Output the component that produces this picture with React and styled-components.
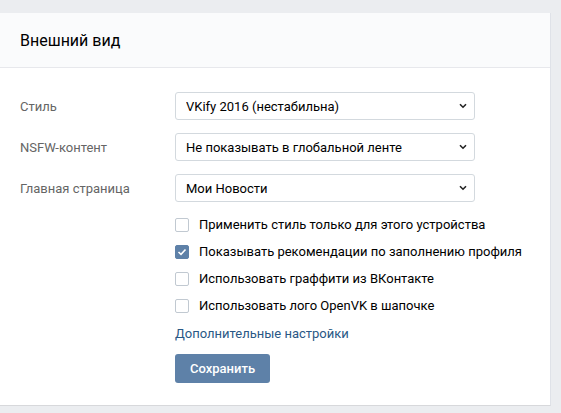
import styled, { createGlobalStyle } from 'styled-components';

const Global = createGlobalStyle`
  body {
    margin: 0;
    background: #ebedf0;
    font-family: Roboto, "Liberation Sans", sans-serif;
    -webkit-font-smoothing: antialiased;
  }
`;

const Page = styled.div`
  padding-top: 13px;
`;

const Card = styled.section`
  width: 551px;
  background: #fff;
  border-right: 1px solid #dfe2e8;
  border-bottom: 1px solid #d7d8db;
  box-sizing: border-box;
`;

const Header = styled.div`
  height: 54px;
  display: flex;
  align-items: center;
  padding-left: 20px;
  background: #fafbfc;
  border-bottom: 1px solid #e7e8ec;
  font-size: 16px;
  color: #000;
`;

const Body = styled.div`
  padding: 24px 0 22px 20px;
`;

const Row = styled.div`
  display: grid;
  grid-template-columns: 155px 300px;
  align-items: center;
  margin-bottom: 13px;

  &:last-of-type {
    margin-bottom: 0;
  }
`;

const Label = styled.div`
  font-size: 13px;
  color: #656565;
`;

const SelectWrap = styled.div`
  position: relative;
  height: 28px;
`;

const Select = styled.select`
  appearance: none;
  width: 100%;
  height: 28px;
  padding: 0 24px 0 10px;
  border: 1px solid #d3d9de;
  border-radius: 3px;
  background: #fff;
  font-family: inherit;
  font-size: 13px;
  color: #000;
  outline: none;
`;

const Chevron = styled.svg`
  position: absolute;
  right: 8px;
  top: 11px;
  pointer-events: none;
`;

const Options = styled.div`
  margin-left: 155px;
  padding-top: 9px;
`;

const CheckRow = styled.label`
  display: flex;
  align-items: center;
  gap: 10px;
  height: 27px;
  font-size: 13px;
  color: #000;
`;

const Box = styled.span`
  width: 14px;
  height: 14px;
  box-sizing: border-box;
  border-radius: 2px;
  border: 1px solid ${(p) => (p.$checked ? '#5e81a8' : '#c1c9d1')};
  background: ${(p) => (p.$checked ? '#5e81a8' : '#fff')};
  display: flex;
  align-items: center;
  justify-content: center;
  flex-shrink: 0;
`;

const Link = styled.a`
  display: block;
  margin-top: 5px;
  font-size: 13px;
  color: #2a5885;
  text-decoration: none;
  line-height: 20px;
`;

const Button = styled.button`
  display: block;
  margin-top: 10px;
  height: 29px;
  padding: 0 15px;
  border: none;
  border-radius: 3px;
  background: #5e81a8;
  color: #fff;
  font-family: inherit;
  font-size: 13px;
  font-weight: 500;
`;

const selects = [
  { label: 'Стиль', value: 'VKify 2016 (нестабильна)' },
  { label: 'NSFW-контент', value: 'Не показывать в глобальной ленте' },
  { label: 'Главная страница', value: 'Мои Новости' },
];

const checks = [
  { text: 'Применить стиль только для этого устройства', checked: false },
  { text: 'Показывать рекомендации по заполнению профиля', checked: true },
  { text: 'Использовать граффити из ВКонтакте', checked: false },
  { text: 'Использовать лого OpenVK в шапочке', checked: false },
];

export default function App() {
  return (
    <Page>
      <Global />
      <Card>
        <Header>Внешний вид</Header>
        <Body>
          <div>
            {selects.map((s) => (
              <Row key={s.label}>
                <Label>{s.label}</Label>
                <SelectWrap>
                  <Select defaultValue={s.value}>
                    <option>{s.value}</option>
                  </Select>
                  <Chevron width="8" height="6" viewBox="0 0 8 6">
                    <path d="M1 1.2 L4 4.2 L7 1.2" fill="none" stroke="#222" strokeWidth="1.6" />
                  </Chevron>
                </SelectWrap>
              </Row>
            ))}
          </div>
          <Options>
            {checks.map((c) => (
              <CheckRow key={c.text}>
                <Box $checked={c.checked}>
                  {c.checked && (
                    <svg width="10" height="8" viewBox="0 0 10 8">
                      <path d="M1.5 4 L4 6.3 L8.5 1.5" fill="none" stroke="#fff" strokeWidth="1.6" />
                    </svg>
                  )}
                </Box>
                {c.text}
              </CheckRow>
            ))}
            <Link href="#">Дополнительные настройки</Link>
            <Button>Сохранить</Button>
          </Options>
        </Body>
      </Card>
    </Page>
  );
}
